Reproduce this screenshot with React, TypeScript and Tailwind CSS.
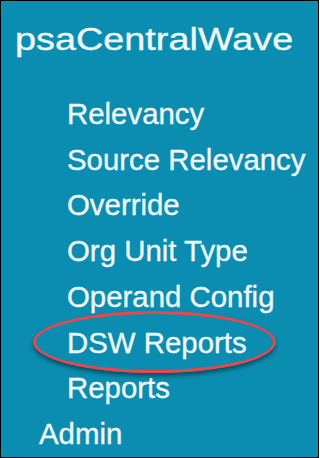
import React from 'react';

const items = ['Relevancy', 'Source Relevancy', 'Override', 'Org Unit Type', 'Operand Config', 'DSW Reports', 'Reports'];

export default function App() {
  return (
    <div className="w-[319px] h-[458px] overflow-hidden border border-black bg-[#0b8db1] text-[#f0f7f9] font-['Liberation_Sans',Arial,sans-serif] [-webkit-text-stroke:0.35px_#f0f7f9]">
      <div className="pt-[19px] pl-[14px]">
        <h1 className="text-[31px] leading-[40px] font-normal origin-left scale-x-[1.22]">psaCentralWave</h1>
      </div>

      <ul className="mt-[31px] pl-[38px] text-[29.4px] leading-[45.7px]">
        <li>
          <ul className="pl-[28px]">
            {items.map((label) => (
              <li key={label} className="relative whitespace-nowrap">
                {label === 'DSW Reports' && (
                  <span className="absolute left-[-34px] top-[-9px] w-[243px] h-[62px] rounded-[50%] border-[3px] border-[#e8474c] shadow-[0_3px_4px_rgba(0,0,0,0.45)]" />
                )}
                <span className="relative">{label}</span>
              </li>
            ))}
          </ul>
        </li>
        <li>Admin</li>
      </ul>
    </div>
  );
}
